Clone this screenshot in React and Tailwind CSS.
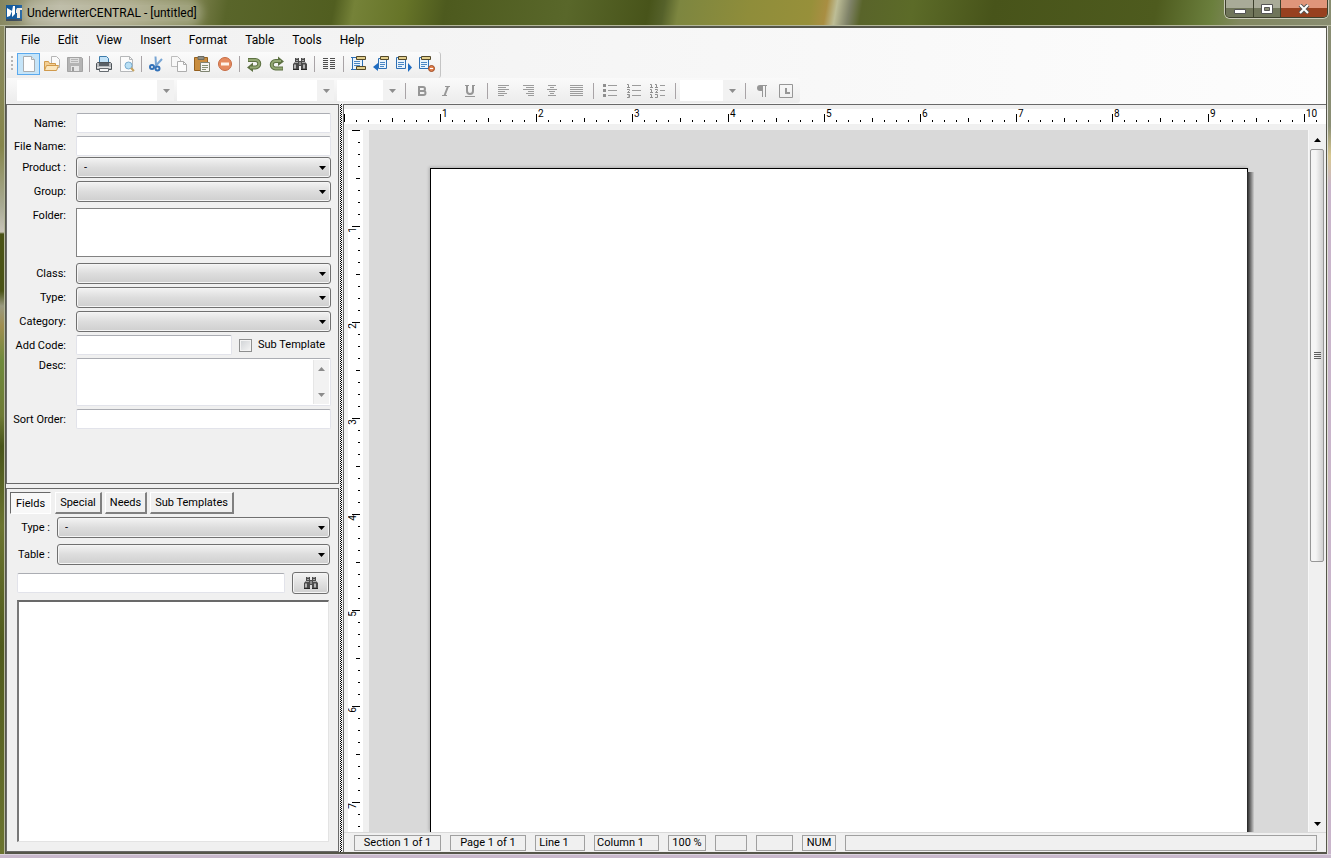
import React from "react";

// ---------- toolbar icons ----------

const Icon = ({ children, size = 16 }) => (
  <svg width={size} height={size} viewBox="0 0 16 16" fill="none" aria-hidden="true">
    {children}
  </svg>
);

const NewIcon = () => (
  <Icon>
    <path d="M2.5.5h8l3 3v12h-11z" fill="#fdfdfd" stroke="#a9adb0" />
    <path d="M10.5.5v3h3" fill="#e4e7ea" stroke="#a9adb0" />
  </Icon>
);

const OpenIcon = () => (
  <Icon>
    <path d="M7.5.5h5l3 3v8h-8z" fill="#fafafa" stroke="#b5b5b5" />
    <path d="M.5 14.5v-9h4l1 2h6v7z" fill="#f3cf94" stroke="#d09a4c" />
    <path d="M.5 14.5l2-5h12l-2 5z" fill="#fbe6bd" stroke="#d09a4c" />
  </Icon>
);

const SaveIcon = () => (
  <Icon>
    <path d="M.5 1.5h14l1 1v13H.5z" fill="#b4b4b4" stroke="#a3a3a3" />
    <path d="M3 2h9v5H3z" fill="#dedede" />
    <path d="M4 3.5h7M4 5.5h7" stroke="#b5b5b5" />
    <path d="M4 10h8v5H4z" fill="#e6e6e6" />
    <path d="M5 11h2v4H5z" fill="#9c9c9c" />
  </Icon>
);

const PrintIcon = () => (
  <Icon>
    <path d="M3.5 7V.5h7l2 2V7z" fill="#c3e2f7" stroke="#3d7cab" />
    <path d="M.5 7.5l1-1h13l1 1v6H.5z" fill="#b8bbbe" stroke="#4d5358" />
    <path d="M3 7h10v3H3z" fill="#5a6168" />
    <path d="M1 11.5h14" stroke="#e4e4e4" />
    <path d="M3.5 12.5h9v3h-9z" fill="#f7f7f7" stroke="#666b70" />
  </Icon>
);

const PreviewIcon = () => (
  <Icon>
    <path d="M1.5.5h9l3 3v12h-12z" fill="#fbfbfb" stroke="#b5b7b9" />
    <path d="M10.5.5v3h3" stroke="#b5b7b9" />
    <circle cx="9.5" cy="9.5" r="3.5" fill="#b9e0f5" stroke="#79acd0" />
    <path d="M12 12l3 3" stroke="#c8a35c" strokeWidth="2" />
  </Icon>
);

const CutIcon = () => (
  <Icon>
    <path d="M7.500.5l.5 8.500M14 3L7.500 10" stroke="#78a5d4" strokeWidth="2" />
    <circle cx="4" cy="11" r="2" stroke="#3271b8" strokeWidth="2" />
    <circle cx="9.500" cy="12.500" r="2" stroke="#3271b8" strokeWidth="2" />
  </Icon>
);

const CopyIcon = () => (
  <Icon>
    <path d="M.5.5h6l3 3v7h-9z" fill="#f8f8f8" stroke="#bdbdbd" />
    <path d="M6.5 5.5h6l3 3v7h-9z" fill="#fcfcfc" stroke="#adadad" />
    <path d="M12.5 5.5v3h3" stroke="#adadad" />
  </Icon>
);

const PasteIcon = () => (
  <Icon>
    <path d="M.5 1.5h13v13H.5z" fill="#c98d3e" stroke="#94601f" />
    <path d="M4 .5h6v3H4z" fill="#8f8f86" stroke="#6d6b60" />
    <path d="M6.5 6.5h9v9h-9z" fill="#f5f5f0" stroke="#808573" />
    <path d="M8 9.5h6M8 11.5h6M8 13.5h4" stroke="#859073" />
  </Icon>
);

const DeleteIcon = () => (
  <Icon>
    <circle cx="8" cy="8" r="6.5" fill="#e58b5f" stroke="#c66c45" />
    <path d="M4 6.5h8v3H4z" fill="#fff4ea" />
  </Icon>
);

const UndoIcon = () => (
  <Icon>
    <path d="M2 4h7.500a3.500 3.500 0 010 7.500H5" stroke="#5d7142" strokeWidth="4" />
    <path d="M7 6.500v9.500L1 11.500z" fill="#5d7142" />
    <path d="M2.500 4h7a3.500 3.500 0 010 7.500H4" stroke="#93a873" strokeWidth="2" />
  </Icon>
);

const RedoIcon = () => (
  <Icon>
    <path d="M14 12.500H6.500a3.500 3.500 0 010-7.500H11" stroke="#5d7142" strokeWidth="4" />
    <path d="M9 .5V10l6-4.500z" fill="#5d7142" />
    <path d="M13.500 12.500h-7a3.500 3.500 0 010-7.500H12" stroke="#93a873" strokeWidth="2" />
  </Icon>
);

const FindIcon = () => (
  <Icon>
    <path d="M3 2h4v3h2V2h4v4l2 2v6H9v-4H7v4H1V8l2-2z" fill="#4a4a4a" />
    <path d="M4 2.500h2M10 2.500h2" stroke="#8f8f8f" />
    <path d="M4 4.500h2M10 4.500h2M3 6.500h3M10 6.500h3" stroke="#a9a9a9" />
    <path d="M3 8.500v4M12 8.500v4" stroke="#b4b4b4" strokeWidth="2" />
    <path d="M7 6h2v3H7z" fill="#8a8a8a" />
    <path d="M1 13.500h6M9 13.500h6" stroke="#262626" />
  </Icon>
);

const ColumnsIcon = () => (
  <Icon>
    <path
      d="M2 2.500h5M2 4.500h5M2 6.500h5M2 8.500h5M2 10.500h5M2 12.500h5M9 2.500h5M9 4.500h5M9 6.500h5M9 8.500h5M9 10.500h5M9 12.500h5"
      stroke="#4f4f4f"
    />
  </Icon>
);

const HeaderFooterIcon = () => (
  <Icon>
    <path d="M2.500 1.500h10v12h-10z" fill="#eaf4fd" stroke="#2d6fb4" />
    <path d="M4 5.500h6M4 7.500h6M4 9.500h6" stroke="#4b87c4" />
    <path d="M6.500.5h9v3h-9zM6.500 10.500h9v3h-9z" fill="#e3cf8d" stroke="#54492a" />
    <path d="M1 13.500h5M1 1.500h2" stroke="#2d6fb4" />
  </Icon>
);

const PrevIcon = () => (
  <Icon>
    <path d="M5.500 2.500h8v10h-8z" fill="#eaf4fd" stroke="#2d6fb4" />
    <path d="M7 6.500h5M7 8.500h5M7 10.500h4" stroke="#4b87c4" />
    <path d="M7.500.5h8v3h-8z" fill="#e3cf8d" stroke="#54492a" />
    <path d="M5 7v8L0 11z" fill="#1f6cc2" />
  </Icon>
);

const NextIcon = () => (
  <Icon>
    <path d="M.5 1.500h9v11h-9z" fill="#eaf4fd" stroke="#2d6fb4" />
    <path d="M2 6.500h6M2 8.500h6M2 10.500h4" stroke="#4b87c4" />
    <path d="M2.500.5h8v3h-8z" fill="#e3cf8d" stroke="#54492a" />
    <path d="M12 7v9l4-4.500z" fill="#1f6cc2" />
  </Icon>
);

const RemoveIcon = () => (
  <Icon>
    <path d="M.5 1.500h9v11h-9z" fill="#eaf4fd" stroke="#2d6fb4" />
    <path d="M2 6.500h6M2 8.500h6M2 10.500h4" stroke="#4b87c4" />
    <path d="M2.500.5h9v3h-9z" fill="#e3cf8d" stroke="#54492a" />
    <circle cx="12.500" cy="12.500" r="3" fill="#e2814f" stroke="#9c4a22" />
    <path d="M11 12.500h3" stroke="#fff" />
  </Icon>
);

// grey alignment glyphs differ only in their line lengths
const LinesIcon = ({ d }) => (
  <Icon>
    <path d={d} stroke="#9c9c9c" />
  </Icon>
);

const LEFT = "M2 2.500h11M2 4.500h8M2 6.500h11M2 8.500h7M2 10.500h9M2 12.500h6";
const RIGHT = "M3 2.500h11M6 4.500h8M3 6.500h11M8 8.500h6M6 10.500h8M8 12.500h6";
const CENTER = "M4 2.500h8M6 4.500h4M3 6.500h10M5 8.500h6M6 10.500h4M4 12.500h8";
const JUSTIFY = "M2 2.500h13M2 4.500h13M2 6.500h13M2 8.500h13M2 10.500h13M2 12.500h13";

const BulletsIcon = () => (
  <Icon>
    <path d="M1 1h3v3H1zM1 6h3v3H1zM1 11h3v3H1z" fill="#8f8f8f" />
    <path d="M6 2.500h9M6 7.500h9M6 12.500h9" stroke="#9c9c9c" />
  </Icon>
);

const NumbersIcon = () => (
  <Icon>
    <path d="M1 1.500h1.500v3M1 4.500h3M1 6.500h2.500v1L1.500 9.500H4M1 11.500h2.500v3H1M2 13h1.500" stroke="#8f8f8f" />
    <path d="M6 2.500h9M6 7.500h9M6 12.500h9" stroke="#9c9c9c" />
  </Icon>
);

const OutlineIcon = () => (
  <Icon>
    <path
      d="M0 1.500h1.500v3M0 4.500h3M5 1.500h1.500v3M5 4.500h3M0 6.500h1.500v3M0 9.500h3M5 6.500h2.500v1L5.500 9.500H8M0 11.500h1.500v3M0 14.500h3M5 11.500h2.500v3H5"
      stroke="#8f8f8f"
    />
    <path d="M10 2.500h5M10 7.500h5M10 12.500h5" stroke="#9c9c9c" />
  </Icon>
);

const BoldIcon = () => (
  <Icon>
    <path d="M5 3v10M4 4h5a2 2 0 010 4H5h4.500a2 2 0 010 4H4" stroke="#969696" strokeWidth="2" />
  </Icon>
);

const ItalicIcon = () => (
  <Icon>
    <path d="M7 3.500h5M4 12.500h5" stroke="#969696" />
    <path d="M10 3.500l-3.500 9" stroke="#969696" strokeWidth="2" />
  </Icon>
);

const UnderlineIcon = () => (
  <Icon>
    <path d="M5 2v6a3 3 0 003 3 3 3 0 003-3V2" stroke="#969696" strokeWidth="2" />
    <path d="M3 13.500h10M3 2.500h4M10 2.500h3" stroke="#969696" />
  </Icon>
);

const PilcrowIcon = () => (
  <Icon>
    <path d="M8 2H6a3 3 0 000 6h2z" fill="#969696" />
    <path d="M6 2.500h7M8.500 2v12M11.500 2v12" stroke="#969696" />
  </Icon>
);

const TabIcon = () => (
  <Icon>
    <path d="M1.500 1.500h13v13h-13z" stroke="#969696" />
    <path d="M8 5v5h4" stroke="#969696" strokeWidth="2" />
  </Icon>
);

const Arrow = ({ up }) => (
  <svg width="7" height="4" viewBox="0 0 7 4" className="fill-current" aria-hidden="true">
    <path d={up ? "M0 4h7L3.500 0z" : "M0 0h7L3.500 4z"} />
  </svg>
);

// ---------- small building blocks ----------

const ToolButton = ({ label, active, wide, children }) => (
  <button
    type="button"
    aria-label={label}
    className={`flex h-[22px] shrink-0 items-center justify-center ${wide ? "w-6" : "w-[23px]"} ${
      active ? "border border-[#5aa9ee] bg-[#c5e4f8]" : ""
    }`}
  >
    {children}
  </button>
);

const Separator = ({ wide }) => (
  <span className={`flex h-4 shrink-0 justify-center ${wide ? "w-[10px]" : "w-[6px]"}`}>
    <span className="w-px bg-[#a8a3a6]" />
  </span>
);

const FormatCombo = ({ label, width }) => (
  <span className={`relative flex h-[21px] shrink-0 ${width}`}>
    <select aria-label={label} className="w-full appearance-none bg-white" />
    <span className="pointer-events-none absolute inset-y-0 right-0 flex w-[17px] items-center justify-center bg-[#f2f2f2] pl-[2px] text-[#8e8e8e]">
      <Arrow />
    </span>
  </span>
);

const Select = ({ id, text }) => (
  <span className="relative flex h-[21px] flex-1">
    <select
      id={id}
      className="w-full appearance-none rounded-[3px] border border-[#707070] bg-linear-to-b from-[#f3f3f3] from-0% via-[#dddddd] via-50% to-[#cfcfcf] px-[7px] text-[11px] leading-4 shadow-[inset_0_0_0_1px_#f5f5f5]"
    >
      <option>{text}</option>
    </select>
    <span className="pointer-events-none absolute inset-y-0 right-[5px] flex items-center">
      <Arrow />
    </span>
  </span>
);

const boxClass = "h-5 min-w-0 rounded-[2px] border border-[#e2e3ea] border-t-[#abadb3] bg-white px-1";

const FormRow = ({ id, label, height, leading = "leading-[22px]", children }) => (
  <div className={`flex items-start gap-[10px] ${height}`}>
    <label htmlFor={id} className={`w-[59px] shrink-0 text-right whitespace-nowrap ${leading}`}>
      {label}
    </label>
    {children}
  </div>
);

const TabButton = ({ active, children }) => (
  <button
    type="button"
    className={`h-[22px] border leading-4 ${
      active
        ? "mr-px border-t-[#696969] border-r-white border-b-white border-l-[#696969] bg-[#f8f8f8] px-[5px] pt-[2px]"
        : "border-t-white border-r-2 border-r-[#808080] border-b-2 border-b-[#808080] border-l-white px-1"
    }`}
  >
    {children}
  </button>
);

const StatusCell = ({ width, children }) => (
  <span className={`flex h-4 items-center justify-center border border-[#a0a0a0] pt-[2px] ${width}`}>{children}</span>
);

// eight divisions to the inch, 12px each
const TICKS = [0, 1, 2, 3, 4, 5, 6, 7];
const WIDTH_INCHES = [0, 1, 2, 3, 4, 5, 6, 7, 8, 9, 10];
const HEIGHT_INCHES = [0, 1, 2, 3, 4, 5, 6, 7];

const HorizontalRuler = () => (
  <div className="mt-1 flex h-[15px] w-full overflow-hidden bg-white text-[10px] leading-[10px]">
    {WIDTH_INCHES.map((inch) =>
      TICKS.map((t) => (
        <span key={`${inch}-${t}`} className="flex h-[13px] w-3 shrink-0 items-end gap-px">
          <span className={`w-px shrink-0 bg-black ${t === 0 ? "h-2" : t === 4 ? "h-1" : "h-[2px]"}`} />
          {t === 0 && inch > 0 && <span className="self-start">{inch}</span>}
        </span>
      ))
    )}
  </div>
);

const VerticalRuler = () => (
  <div className="ml-1 w-[15px] shrink-0 overflow-hidden bg-white text-[10px] leading-[10px]">
    {HEIGHT_INCHES.map((inch) =>
      TICKS.map((t) => (
        <span key={`${inch}-${t}`} className="flex h-3 w-3 flex-col items-end">
          <span className={`h-px shrink-0 bg-black ${t === 0 ? "w-2" : t === 4 ? "w-1" : "w-[2px]"}`} />
          {t === 0 && inch > 0 && (
            <span className="rotate-180 self-start [writing-mode:vertical-rl]">{inch}</span>
          )}
        </span>
      ))
    )}
  </div>
);

// ---------- window parts ----------

const TitleBar = () => (
  <header className="flex h-[26px] shrink-0 items-start justify-between border-b border-[#b4b79c] bg-[linear-gradient(100deg,#85865f_0,#aaa88e_60px,#9c9a74_130px,#7e824f_190px,#59652a_225px,#515e20_330px,#758238_350px,#667428_400px,#4d5a1e_440px,#59672a_560px,#48541a_640px,#55612a_655px,#7d8640_670px,#8f8d3a_740px,#97903a_800px,#a98e42_815px,#bdbd96_825px,#7f8268_838px,#59642a_850px,#5c6b28_900px,#48541a_980px,#4e5b1e_1140px,#6b7f3d_1195px,#828860_1225px,#8a8e74_1331px)] pr-[3px] pl-[6px]">
    <div className="flex items-center pt-[5px]">
      <svg width="16" height="16" viewBox="0 0 16 16" aria-hidden="true">
        <path d="M0 0h16v16H0z" fill="#145a9c" />
        <path d="M1 3l5 3-2 5-3 1zM7 1h2v8l-3 3V6z" fill="#fff" />
        <path d="M11 3h5v2h-2v8h-3V8h-1V5z" fill="#f1e9df" />
        <path d="M0 14h16v2H0z" fill="#3e4c5c" />
      </svg>
      <h1 className="ml-[5px] rounded-full bg-white/25 text-[12px] leading-4 shadow-[0_0_8px_6px_rgba(255,255,255,0.25)]">
        UnderwriterCENTRAL - [untitled]
      </h1>
    </div>
    <div className="flex h-[18px] overflow-hidden rounded-b-[5px] border border-t-0 border-[#3d402c] shadow-[0_0_0_1px_#c9cab8]">
      <button
        type="button"
        aria-label="Minimize"
        className="flex w-7 items-center justify-center border-r border-[#3d402c] bg-linear-to-b from-[#a9ab98] from-45% to-[#70755a] to-50%"
      >
        <svg width="12" height="10" viewBox="0 0 12 10">
          <path d="M.5 5.500h11v4H.5z" fill="#fff" stroke="#555" />
        </svg>
      </button>
      <button
        type="button"
        aria-label="Maximize"
        className="flex w-[27px] items-center justify-center border-r border-[#3d402c] bg-linear-to-b from-[#a9ab98] from-45% to-[#70755a] to-50%"
      >
        <svg width="12" height="10" viewBox="0 0 12 10">
          <path d="M.5.5h11v9H.5z" fill="#fff" stroke="#555" />
          <path d="M3.500 3.500h5v3h-5z" fill="#8a8d76" stroke="#555" />
        </svg>
      </button>
      <button
        type="button"
        aria-label="Close"
        className="flex w-[46px] items-center justify-center bg-linear-to-b from-[#e0957a] from-45% to-[#97401f] to-50%"
      >
        <svg width="12" height="10" viewBox="0 0 12 10">
          <path d="M2 1l8 8M10 1L2 9" stroke="#555" strokeWidth="4" />
          <path d="M2 1l8 8M10 1L2 9" stroke="#fff" strokeWidth="2" />
        </svg>
      </button>
    </div>
  </header>
);

const menus = ["File", "Edit", "View", "Insert", "Format", "Table", "Tools", "Help"];

const MenuBar = () => (
  <nav className="flex h-6 items-center gap-[18px] pl-[15px] text-[12px]">
    {menus.map((m) => (
      <button key={m} type="button">
        {m}
      </button>
    ))}
  </nav>
);

const MainToolbar = () => (
  <div className="ml-px flex h-[26px] w-[434px] items-center rounded-r-[3px] border-r border-[#c4c4c4] bg-linear-to-b from-[#fbfbfb] to-[#ededed] pb-[2px] pl-[4px]">
    <span className="mr-[4px] h-4 w-[2px] bg-[repeating-linear-gradient(#b5b5b5_0_2px,transparent_2px_4px)]" />
    <ToolButton label="New" active><NewIcon /></ToolButton>
    <ToolButton label="Open"><OpenIcon /></ToolButton>
    <ToolButton label="Save"><SaveIcon /></ToolButton>
    <Separator />
    <ToolButton label="Print"><PrintIcon /></ToolButton>
    <ToolButton label="Print preview"><PreviewIcon /></ToolButton>
    <Separator />
    <ToolButton label="Cut"><CutIcon /></ToolButton>
    <ToolButton label="Copy"><CopyIcon /></ToolButton>
    <ToolButton label="Paste"><PasteIcon /></ToolButton>
    <ToolButton label="Delete"><DeleteIcon /></ToolButton>
    <Separator />
    <ToolButton label="Undo"><UndoIcon /></ToolButton>
    <ToolButton label="Redo"><RedoIcon /></ToolButton>
    <ToolButton label="Find"><FindIcon /></ToolButton>
    <Separator />
    <ToolButton label="Columns"><ColumnsIcon /></ToolButton>
    <Separator />
    <ToolButton label="Headers and footers"><HeaderFooterIcon /></ToolButton>
    <ToolButton label="Previous"><PrevIcon /></ToolButton>
    <ToolButton label="Next"><NextIcon /></ToolButton>
    <ToolButton label="Remove"><RemoveIcon /></ToolButton>
  </div>
);

const FormatToolbar = () => (
  <div className="ml-px flex h-[25px] w-[793px] items-center rounded-r-[3px] bg-linear-to-b from-[#fafafa] to-[#ececec] pl-[10px]">
    <div className="flex gap-[3px]">
      <FormatCombo label="Style" width="w-[157px]" />
      <FormatCombo label="Font" width="w-[157px]" />
      <FormatCombo label="Size" width="w-[63px]" />
    </div>
    <Separator wide />
    <ToolButton wide label="Bold"><BoldIcon /></ToolButton>
    <ToolButton wide label="Italic"><ItalicIcon /></ToolButton>
    <ToolButton wide label="Underline"><UnderlineIcon /></ToolButton>
    <Separator wide />
    <ToolButton wide label="Align left"><LinesIcon d={LEFT} /></ToolButton>
    <ToolButton wide label="Align right"><LinesIcon d={RIGHT} /></ToolButton>
    <ToolButton wide label="Center"><LinesIcon d={CENTER} /></ToolButton>
    <ToolButton wide label="Justify"><LinesIcon d={JUSTIFY} /></ToolButton>
    <Separator wide />
    <ToolButton wide label="Bullets"><BulletsIcon /></ToolButton>
    <ToolButton wide label="Numbering"><NumbersIcon /></ToolButton>
    <ToolButton wide label="Outline numbering"><OutlineIcon /></ToolButton>
    <Separator wide />
    <FormatCombo label="Zoom" width="w-[60px]" />
    <Separator wide />
    <ToolButton wide label="Control characters"><PilcrowIcon /></ToolButton>
    <ToolButton wide label="Tabs"><TabIcon /></ToolButton>
  </div>
);

const PropertiesForm = () => (
  <form className="h-[380px] shrink-0 border border-[#696969] pt-2 pr-[7px]">
    <FormRow id="name" label="Name:" height="h-[23px]">
      <input id="name" type="text" className={`${boxClass} flex-1`} />
    </FormRow>
    <FormRow id="fileName" label="File Name:" height="h-[21px]">
      <input id="fileName" type="text" className={`${boxClass} flex-1`} />
    </FormRow>
    <FormRow id="product" label="Product :" height="h-6">
      <Select id="product" text="-" />
    </FormRow>
    <FormRow id="group" label="Group:" height="h-6">
      <Select id="group" />
    </FormRow>
    <FormRow id="folder" label="Folder:" height="h-[58px]">
      <textarea id="folder" className="mt-[3px] h-[49px] min-w-0 flex-1 resize-none border border-[#828282] bg-white" />
    </FormRow>
    <FormRow id="class" label="Class:" height="h-6">
      <Select id="class" />
    </FormRow>
    <FormRow id="type" label="Type:" height="h-6">
      <Select id="type" />
    </FormRow>
    <FormRow id="category" label="Category:" height="h-6">
      <Select id="category" />
    </FormRow>
    <FormRow id="addCode" label="Add Code:" height="h-[23px]">
      <div className="flex min-w-0 flex-1 gap-[7px]">
        <input id="addCode" type="text" className={`${boxClass} flex-1`} />
        <span className="flex h-5 w-[92px] shrink-0 items-center gap-[6px]">
          <input
            id="subTemplate"
            type="checkbox"
            className="h-[13px] w-[13px] appearance-none border border-[#8e8f8f] bg-linear-to-br from-[#cfd2d5] to-[#f6f6f6] shadow-[inset_0_0_0_1px_#f4f4f4]"
          />
          <label htmlFor="subTemplate" className="leading-[22px] whitespace-nowrap">
            Sub Template
          </label>
        </span>
      </div>
    </FormRow>
    <FormRow id="desc" label="Desc:" height="h-[51px]" leading="leading-4">
      <div className="flex h-12 flex-1 rounded-[2px] border border-[#e2e3ea] border-t-[#abadb3] bg-white">
        <textarea id="desc" className="min-w-0 flex-1 resize-none" />
        <div className="my-px mr-px flex w-4 flex-col items-center justify-between border-l border-[#e6e6e6] bg-[#f2f2f2] py-[7px] text-[#8b8b8b]">
          <Arrow up />
          <Arrow />
        </div>
      </div>
    </FormRow>
    <FormRow id="sortOrder" label="Sort Order:" height="h-5">
      <input id="sortOrder" type="text" className={`${boxClass} flex-1`} />
    </FormRow>
  </form>
);

const FieldsPanel = () => (
  <section className="mt-1 flex min-h-0 flex-1 flex-col border border-[#696969] px-[3px] pt-[3px] pb-[9px]">
    <div className="flex gap-[3px]">
      <TabButton active>Fields</TabButton>
      <TabButton>Special</TabButton>
      <TabButton>Needs</TabButton>
      <TabButton>Sub Templates</TabButton>
    </div>
    <div className="mt-[3px] flex min-h-0 flex-1 flex-col pr-[5px]">
      <div className="flex h-[21px] gap-[7px]">
        <label htmlFor="fieldType" className="w-10 text-right leading-[22px]">
          Type :
        </label>
        <Select id="fieldType" text="-" />
      </div>
      <div className="mt-[6px] flex h-[21px] gap-[7px]">
        <label htmlFor="fieldTable" className="w-10 text-right leading-[22px]">
          Table :
        </label>
        <Select id="fieldTable" />
      </div>
      <div className="mt-[7px] mr-px ml-[7px] flex items-center gap-[7px]">
        <input type="text" aria-label="Search fields" className={`${boxClass} flex-1`} />
        <button
          type="button"
          aria-label="Search"
          className="flex h-[22px] w-[37px] items-center justify-center rounded-[3px] border border-[#707070] bg-linear-to-b from-[#f3f3f3] to-[#cfcfcf] shadow-[inset_0_0_0_1px_#f5f5f5]"
        >
          <FindIcon />
        </button>
      </div>
      <div className="mt-[6px] mr-px ml-[7px] flex-1 border border-t-2 border-l-2 border-[#e3e3e3] border-t-[#696969] border-l-[#787878] bg-white" />
    </div>
  </section>
);

const ScrollBar = () => (
  <div className="flex w-[18px] shrink-0 flex-col items-center border-l border-[#f8f8f8] bg-[#f0f0f0] pr-px">
    <button type="button" aria-label="Scroll up" className="flex h-[19px] w-full shrink-0 items-center justify-center">
      <Arrow up />
    </button>
    <div className="flex min-h-0 w-full flex-1 flex-col px-px">
      <div className="flex h-[62%] flex-col items-center justify-center gap-px rounded-[2px] border border-[#979797] bg-linear-to-r from-[#f5f5f5] from-40% to-[#d0d0d0]">
        <span className="h-px w-[7px] bg-[#5f5f5f]" />
        <span className="h-px w-[7px] bg-[#5f5f5f]" />
        <span className="h-px w-[7px] bg-[#5f5f5f]" />
        <span className="h-px w-[7px] bg-[#5f5f5f]" />
      </div>
    </div>
    <button type="button" aria-label="Scroll down" className="flex h-[17px] w-full shrink-0 items-center justify-center">
      <Arrow />
    </button>
  </div>
);

const StatusBar = () => (
  <footer className="flex h-5 shrink-0 items-center gap-[9px] border-t border-[#d9d9d9] pr-[9px] pl-[10px]">
    <StatusCell width="w-[87px]">Section 1 of 1</StatusCell>
    <StatusCell width="w-[76px]">Page 1 of 1</StatusCell>
    <StatusCell width="w-[50px] pr-3">Line 1</StatusCell>
    <StatusCell width="w-[65px] pr-3">Column 1</StatusCell>
    <StatusCell width="w-[38px]">100 %</StatusCell>
    <StatusCell width="w-8" />
    <StatusCell width="w-[37px]" />
    <StatusCell width="w-[34px]">NUM</StatusCell>
    <StatusCell width="flex-1" />
  </footer>
);

const Editor = () => (
  <main className="flex min-w-0 flex-1 flex-col border-t border-l border-[#696969]">
    <HorizontalRuler />
    <div className="mt-[6px] flex min-h-0 flex-1">
      <VerticalRuler />
      <div className="ml-[6px] flex min-w-0 flex-1 justify-center overflow-hidden bg-[#d9d9d9] pt-[38px]">
        <div
          role="textbox"
          aria-label="Document page"
          className="relative w-[818px] shrink-0 border border-b-0 border-black bg-white shadow-[-1px_-1px_3px_rgba(0,0,0,0.2)]"
        >
          <div className="absolute top-[3px] bottom-0 left-full w-[7px] bg-linear-to-r from-[#222222] to-[#cfcfcf]" />
        </div>
      </div>
      <ScrollBar />
    </div>
    <StatusBar />
  </main>
);

const App = () => {
  return (
    <div className="flex h-screen flex-col overflow-hidden bg-[#c8b8cc] text-[11px] text-black font-[Roboto,sans-serif]">
      <TitleBar />
      <div className="flex min-h-0 flex-1">
        <div className="w-[5px] shrink-0 border-r border-[#b4b79c] bg-[linear-gradient(#8a8a60_0,#85854a_120px,#a9ab94_180px,#c8c4b8_206px,#4a5316_208px,#4a5316_265px,#9a9a80_280px,#a08e50_300px,#6e8a3c_335px,#6e7a35_390px,#48541a_420px,#6b7430_500px,#4f5a1c_620px,#6b7430_100%)]" />
        <div className="flex min-w-0 flex-1 flex-col border border-t-2 border-b-2 border-[#55564a] bg-linear-to-r from-[#f0f0f0] to-[#fdfdfd]">
          <MenuBar />
          <MainToolbar />
          <FormatToolbar />
          <div className="mt-px flex min-h-0 flex-1 bg-[#f0f0f0]">
            <aside className="flex w-[333px] shrink-0 flex-col">
              <PropertiesForm />
              <FieldsPanel />
            </aside>
            <div className="mx-px w-[2px] bg-[repeating-conic-gradient(#000_0_25%,#fff_0_50%)] bg-size-[2px_2px]" />
            <Editor />
          </div>
        </div>
        <div className="w-1 shrink-0 border-l border-[#e2e2da] bg-[linear-gradient(#8a8e74_0,#8a8e74_100px,#d8c890_130px,#c9b5cb_160px,#c9b5cb_100%)]" />
      </div>
      <div className="h-1 shrink-0 border-t border-[#dcd3df] bg-[#c9b9cd]" />
    </div>
  );
};

export default App;
